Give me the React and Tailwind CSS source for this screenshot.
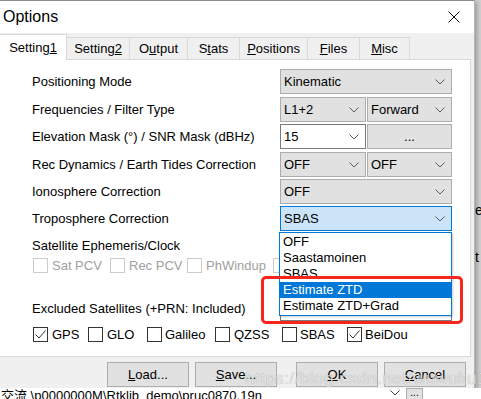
import React from "react";

const Chevron = () => (
  <svg width="10" height="6" viewBox="0 0 10 6" className="shrink-0">
    <path d="M0.5 0.5 L5 5 L9.5 0.5" fill="none" stroke="#5a5a5a" strokeWidth="1" />
  </svg>
);

const Combo = ({ text, className }) => (
  <div className={`h-[25px] flex items-center justify-between pl-[3px] pr-[6px] border ${className}`}>
    <span className="leading-none">{text}</span>
    <Chevron />
  </div>
);

const Row = ({ label, children, h }) => (
  <div className={`flex items-start ${h}`}>
    <div className="w-[280px] h-[25px] flex items-center pl-[32px] whitespace-nowrap">{label}</div>
    <div className="flex gap-[1px] w-[172px]">{children}</div>
  </div>
);

const Check = ({ checked, disabled }) => (
  <div
    className={`w-[15px] h-[15px] border bg-white flex items-center justify-center shrink-0 ${
      disabled ? "border-[#cccccc]" : "border-[#333333]"
    }`}
  >
    {checked && (
      <svg width="13" height="13" viewBox="0 0 13 13">
        <path d="M1.5 6.5 L5 10 L11.5 2.5" fill="none" stroke="#333" strokeWidth="1" />
      </svg>
    )}
  </div>
);

const Btn = ({ children }) => (
  <div className="w-[82px] h-[25px] border border-[#adadad] bg-[#e1e1e1] flex items-center justify-center">
    {children}
  </div>
);

export default function App() {
  return (
    <div
      className="w-[481px] h-[399px] overflow-hidden bg-[#cfcfcf] text-[13px] text-black relative"
      style={{ fontFamily: '"Liberation Sans", Arial, sans-serif' }}
    >
      {/* Dialog */}
      <div className="w-[475px] h-[388px] flex flex-col bg-[#f0f0f0] border-t border-[#8a8a8a] border-r border-r-[#b5b5b5] shadow-[2px_2px_4px_rgba(0,0,0,0.25)]">
        {/* Title bar */}
        <div className="h-[32px] bg-white flex items-center justify-between pl-[3px] pr-[14px] shrink-0">
          <span className="text-[16px]">Options</span>
          <svg width="12" height="12" viewBox="0 0 12 12">
            <path d="M0.5 0.5 L11.5 11.5 M11.5 0.5 L0.5 11.5" stroke="#111" strokeWidth="1" />
          </svg>
        </div>

        {/* Tabs */}
        <div className="flex items-end h-[26px] shrink-0">
          <div className="w-[67px] h-[26px] bg-white border-r border-t border-[#d9d9d9] flex items-center justify-center relative z-10 -mb-[1px]">
            <span>
              Setting<u>1</u>
            </span>
          </div>
          <div className="w-[63px] h-[22px] border-r border-t border-[#d9d9d9] flex items-center justify-center">
            <span>
              Setting<u>2</u>
            </span>
          </div>
          <div className="w-[58px] h-[22px] border-r border-t border-[#d9d9d9] flex items-center justify-center">
            <span>
              O<u>u</u>tput
            </span>
          </div>
          <div className="w-[52px] h-[22px] border-r border-t border-[#d9d9d9] flex items-center justify-center">
            <span>
              S<u>t</u>ats
            </span>
          </div>
          <div className="w-[68px] h-[22px] border-r border-t border-[#d9d9d9] flex items-center justify-center">
            <span>
              <u>P</u>ositions
            </span>
          </div>
          <div className="w-[52px] h-[22px] border-r border-t border-[#d9d9d9] flex items-center justify-center">
            <span>
              <u>F</u>iles
            </span>
          </div>
          <div className="w-[50px] h-[22px] border-r border-t border-[#d9d9d9] flex items-center justify-center">
            <span>
              <u>M</u>isc
            </span>
          </div>
        </div>

        {/* Panel */}
        <div className="w-[471px] h-[298px] shrink-0 bg-white border border-l-0 border-[#d9d9d9] relative pt-[9px]">
          <Row label="Positioning Mode" h="h-[28px]">
            <Combo text="Kinematic" className="w-[172px] bg-[#e1e1e1] border-[#adadad]" />
          </Row>
          <Row label="Frequencies / Filter Type" h="h-[27px]">
            <Combo text="L1+2" className="w-[86px] bg-[#e1e1e1] border-[#adadad]" />
            <Combo text="Forward" className="w-[85px] bg-[#e1e1e1] border-[#adadad]" />
          </Row>
          <Row label="Elevation Mask (°) / SNR Mask (dBHz)" h="h-[28px]">
            <Combo text="15" className="w-[86px] bg-white border-[#7a7a7a]" />
            <div className="w-[85px] h-[25px] border border-[#adadad] bg-[#e1e1e1] flex items-center justify-center">
              ...
            </div>
          </Row>
          <Row label="Rec Dynamics / Earth Tides Correction" h="h-[27px]">
            <Combo text="OFF" className="w-[86px] bg-[#e1e1e1] border-[#adadad]" />
            <Combo text="OFF" className="w-[85px] bg-[#e1e1e1] border-[#adadad]" />
          </Row>
          <Row label="Ionosphere Correction" h="h-[27px]">
            <Combo text="OFF" className="w-[172px] bg-[#e1e1e1] border-[#adadad]" />
          </Row>
          <Row label="Troposphere Correction" h="h-[27px]">
            <Combo text="SBAS" className="w-[172px] bg-[#cce4f7] border-[#0078d7]" />
          </Row>
          <Row label="Satellite Ephemeris/Clock" h="h-[25px]">
            <Combo text="Broadcast" className="w-[172px] bg-[#e1e1e1] border-[#adadad]" />
          </Row>

          {/* disabled checkboxes */}
          <div className="flex items-center h-[15px] pl-[33px] text-[#a0a0a0]">
            <Check disabled />
            <span className="ml-[4px] w-[58px]">Sat PCV</span>
            <Check disabled />
            <span className="ml-[4px] w-[58px]">Rec PCV</span>
            <Check disabled />
            <span className="ml-[4px] w-[67px]">PhWindup</span>
            <Check disabled />
            <span className="ml-[4px]">Reject Ecl</span>
          </div>

          <div className="flex items-center h-[24px] mt-[24px]">
            <div className="w-[280px] pl-[32px] whitespace-nowrap">Excluded Satellites (+PRN: Included)</div>
            <div className="w-[172px] h-[24px] border border-[#7a7a7a] bg-white" />
          </div>

          <div className="flex items-center h-[15px] mt-[6px] pl-[33px]">
            <Check checked />
            <span className="ml-[4px] w-[36px]">GPS</span>
            <Check />
            <span className="ml-[4px] w-[40px]">GLO</span>
            <Check />
            <span className="ml-[3px] w-[50px]">Galileo</span>
            <Check />
            <span className="ml-[4px] w-[48px]">QZSS</span>
            <Check />
            <span className="ml-[3px] w-[47px]">SBAS</span>
            <Check checked />
            <span className="ml-[3px]">BeiDou</span>
          </div>

          {/* Dropdown list */}
          <div className="absolute left-[279px] top-[172px] w-[173px] bg-white border border-[#0078d7] py-[1px] shadow-[1px_1px_2px_rgba(0,0,0,0.2)] leading-[16px]">
            <div className="h-[16px] pl-[3px]">OFF</div>
            <div className="h-[16px] pl-[3px]">Saastamoinen</div>
            <div className="h-[16px] pl-[3px]">SBAS</div>
            <div className="h-[16px] pl-[3px] bg-[#0078d7] text-white">Estimate ZTD</div>
            <div className="h-[16px] pl-[3px]">Estimate ZTD+Grad</div>
          </div>
        </div>

        {/* Buttons */}
        <div className="flex items-start pt-[5px]">
          <div className="ml-[107px] flex gap-[6px]">
            <Btn>
              <u>L</u>oad...
            </Btn>
            <Btn>
              <u>S</u>ave...
            </Btn>
          </div>
          <div className="ml-[19px] flex gap-[6px]">
            <Btn>
              <u>O</u>K
            </Btn>
            <Btn>
              <u>C</u>ancel
            </Btn>
          </div>
        </div>
      </div>

      {/* background window strip below dialog */}
      <div className="h-[11px] bg-white flex items-start whitespace-nowrap">
        <span
          className="text-[13px] leading-[13px] mt-[1px] pl-[1px] w-[390px]"
          style={{ fontFamily: '"Liberation Sans", "Noto Sans CJK SC", sans-serif' }}
        >
          交流 \p0000000M\Rtklib_demo\pruc0870.19n
        </span>
        <svg width="10" height="6" viewBox="0 0 10 6" className="mt-[2px]">
          <path d="M0.5 0.5 L5 5 L9.5 0.5" fill="none" stroke="#444" strokeWidth="1" />
        </svg>
        <div className="ml-[6px] w-[17px] h-[11px] border border-[#adadad] border-b-0 bg-[#e1e1e1] text-[10px] leading-[8px] text-center">
          ...
        </div>
      </div>

      {/* background text fragments at the right edge */}
      <div className="absolute left-[475px] top-[203px] text-[14px] leading-[14px]">e</div>
      <div className="absolute left-[475px] top-[250px] text-[14px] leading-[14px]">t</div>

      {/* red annotation */}
      <div className="absolute left-[261px] top-[276px] w-[202px] h-[48px] border-[3px] border-[#f5261b] rounded-[5px]" />

      {/* watermark */}
      <div className="absolute left-[245px] top-[366px] text-[17px] text-white/70 tracking-[0.5px] [text-shadow:0_0_1px_rgba(0,0,0,0.35)]">
        https://blog.csdn.net/wuwuku123
      </div>
    </div>
  );
}
